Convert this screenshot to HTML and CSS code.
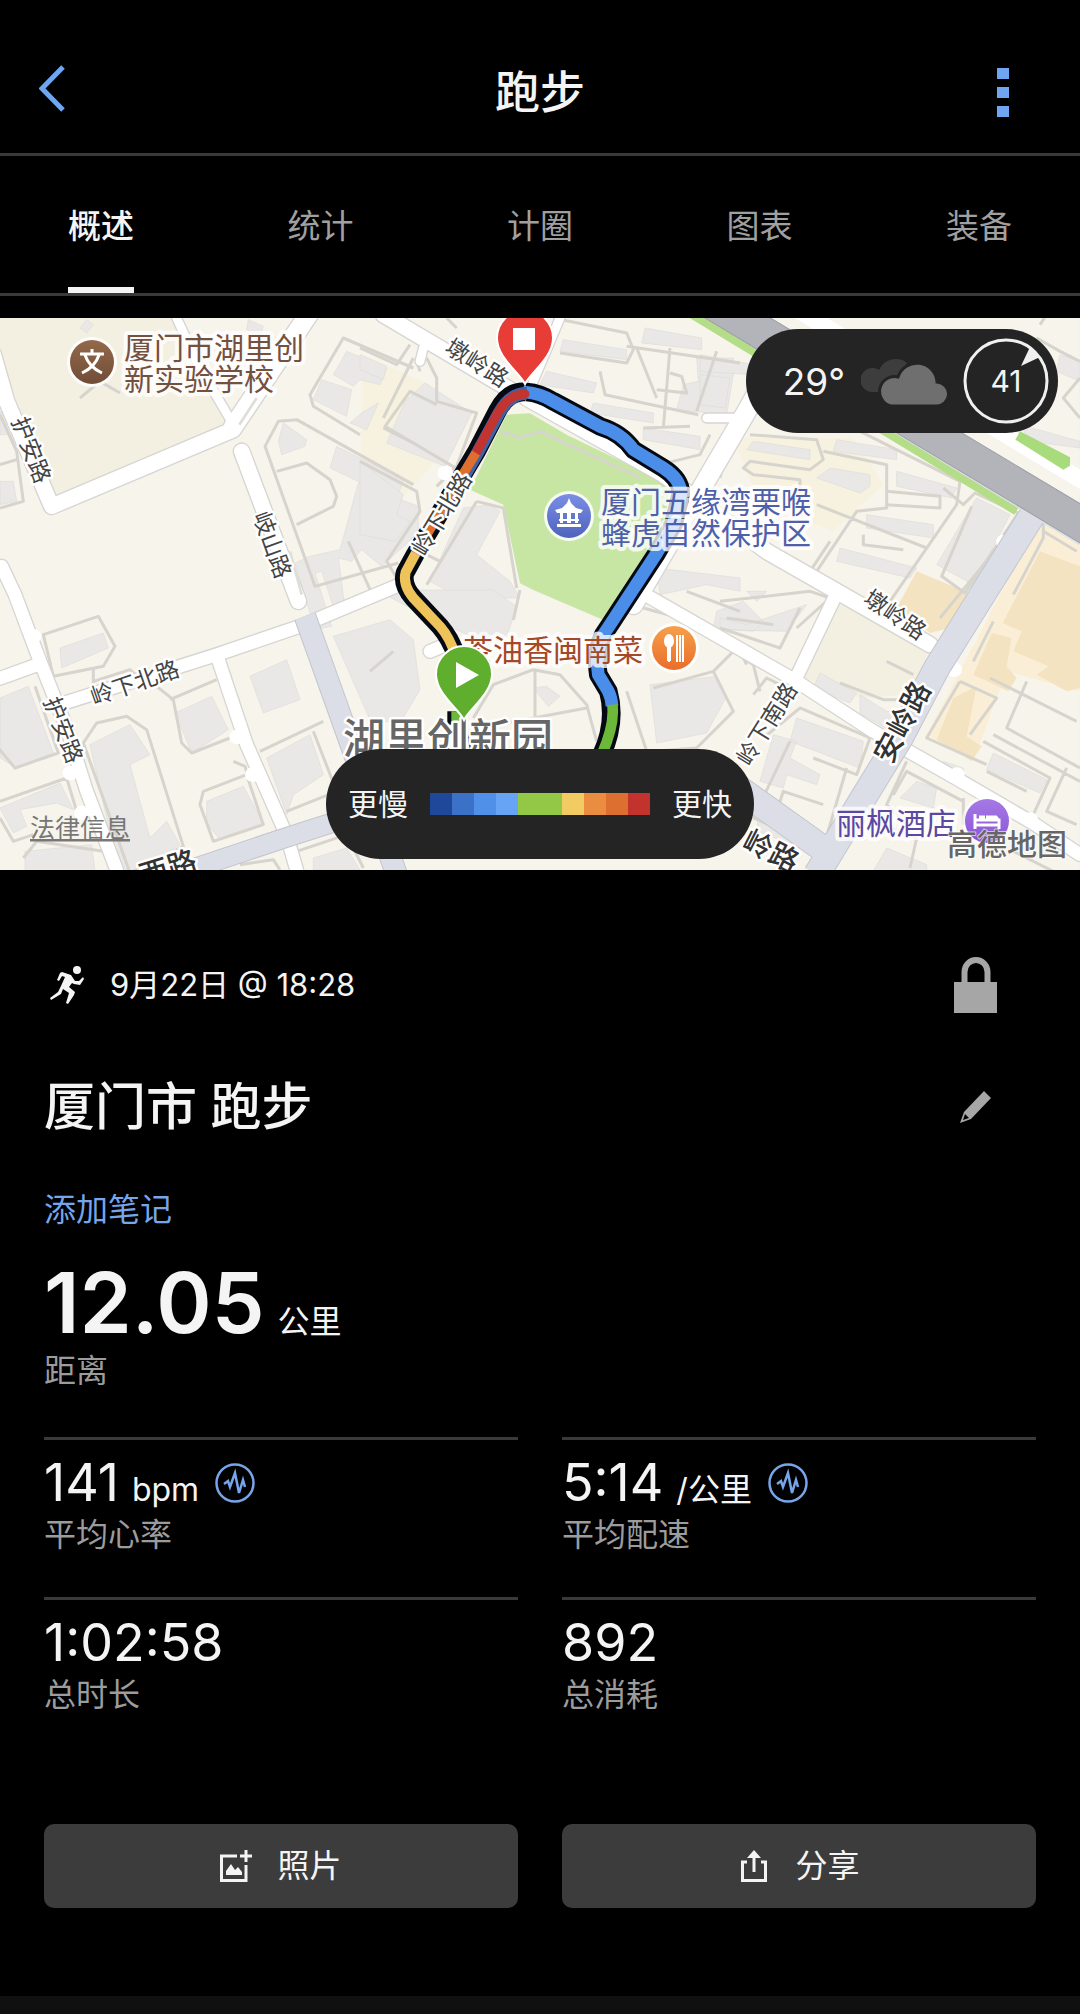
FILE: index.html
```html
<!DOCTYPE html>
<html lang="zh-CN">
<head>
  <meta charset="utf-8">
  <meta name="viewport" content="width=device-width, initial-scale=1">
  <title>跑步</title>
  <link rel="stylesheet" href="styles.css">
</head>
<body>
  <header class="top-bar">
    <button class="icon-button back-button" aria-label="返回">
      <svg width="26" height="48" viewBox="0 0 26 48"><path d="M24 2L3 23.500L24 45" fill="none" stroke="#6ea6f2" stroke-width="5"/></svg>
    </button>
    <h1 class="page-title">跑步</h1>
    <button class="icon-button menu-button" aria-label="更多">
      <svg width="12" height="50" viewBox="0 0 12 50" fill="#6ea6f2"><path d="M0 0h12v11H0zM0 19h12v11H0zM0 38h12v11H0z"/></svg>
    </button>
  </header>

  <nav class="tabs" role="tablist">
    <button class="tab active" role="tab" aria-selected="true">概述</button>
    <button class="tab" role="tab">统计</button>
    <button class="tab" role="tab">计圈</button>
    <button class="tab" role="tab">图表</button>
    <button class="tab" role="tab">装备</button>
  </nav>

  <section class="map">
    <svg class="map-canvas" viewBox="0 0 1080 552">
      <defs>
        <linearGradient id="brown" x2="0" y2="1"><stop stop-color="#94694a"/><stop offset="1" stop-color="#704c38"/></linearGradient>
        <linearGradient id="indigo" x2="0" y2="1"><stop stop-color="#7a8ee6"/><stop offset="1" stop-color="#4f63bd"/></linearGradient>
        <linearGradient id="orange" x2="0" y2="1"><stop stop-color="#f6a04a"/><stop offset="1" stop-color="#ea6d2b"/></linearGradient>
        <linearGradient id="purple" x2="0" y2="1"><stop stop-color="#a679e6"/><stop offset="1" stop-color="#8a55d6"/></linearGradient>
      </defs>

      <!-- terrain is drawn at 3 units per pixel -->
      <g transform="scale(.33333)">
        <rect width="3240" height="1656" fill="#f7f4ec"/>
        <path fill="#f3f0e2" d="M0 0H530L700 330 160 570 0 110zM2530 840L2790 990 2730 1130 2580 1140 2410 1080z"/>
        <path fill="#f7f2df" d="M1090 110L1290 200 1350 380 1200 550 1080 460zM2200 360H2560L2650 500 2500 640 2280 560z"/>
        <path fill="#faefd6" d="M3130 596L3240 650V1120L3020 1060 2920 1330 2780 1250 3000 830z"/>
        <path fill="#f4e3c1" d="M2750 760L2920 830 2850 930 2790 945 2690 870zM3120 700L3240 745V1110L3200 1120 3110 1070 3145 1045 3040 1000 3065 940 3008 915zM2975 945L3035 960 3020 1045 3050 1080 3025 1120 2920 1070zM2860 1140L2930 1105 2900 1255 2945 1285 2915 1330 2810 1265z"/>
        <path fill="#c8e6a3" d="M1520 290L1590 286 1700 350 2010 500 1990 660 1810 906 1600 816 1560 796 1510 560 1410 515 1500 330z"/>

        <!-- buildings -->
        <g class="building">
          <path d="M260 5l20 15-20 25-20-15zM745 5l45 20-10 30-40-20zM1040 100l120 50-20 50-60-15-20 20-60-35zM965 185l90 30-15 80-100-50zM1085 285l50-30-35 80-50-20zM850 315l70 50-5 20-70 25-10-40zM1010 385l200 100-20 60-200-95zM1075 495l180 70v80l-110 100-60-50-30 35-40-10 20 150-30 10-40-120-20 5 50 160-50 10-60-200 45-20 90-20zM0 490h40l10 60-50 10zM0 280l20 10v60H0z"/>
          <path d="M1080 110l80 35-10 40-70-30zM1215 250l60-55 140 90-80 160-175-70zM1080 430l130 100-20 60 40 20-45 60-105-20zM1470 560l30 20-70 130 100 80 30 50h-180l-90-50 100-220zM1690 65l190 30v30l-200-25zM1640 160l150 35-10 30-160-25zM1780 255l180 30v30l-190-30zM1935 30l170 30v35l-180-20zM2090 120h110v50l-20 120-150-15 20-75 45-10zM1930 330l170 25v40l-170-30zM1970 750l250 30v40l-100-20-140 30z"/>
          <path d="M2100 110l160 30v30l-160-10zM2100 170l90 10-15 90-75-10zM2260 370l170 25v30l-190-30zM2510 365l180 30v30l-190-25zM2490 450l120 20v35l-30 20-130-45zM2690 460l180 50-15 30-165-35zM2600 590l200 30v40l-200-30zM2520 690l230 60-20 30-220-50zM2930 540l100 50-110 210-110-60zM3180 110l60 20v60l-70-30zM3060 320l180 50v20l-150-20z"/>
          <path d="M180 990l130-45 15 45-140 60zM0 1140l85-35 75 200-110 45-50-30zM270 1280l120-60 60 90-60 30 60 220 50-50 40 70-150 90-30 10zM0 1470l180-75 40 80-50-20-110 20 20 50-40 20zM75 1600l200-20 10 80H75zM525 1185l110-50 50 100-110 70zM620 1450l110-45 60 110-130 50-40-50zM800 1320l130-70 40 120-90 60-20 60zM750 1075l110-50 40 120-110 40zM1000 955l170-50 70 60 20 150-60 100-90-10zM1600 1110l40-5 40 30-35 30z"/>
          <path d="M1130 816h350l70 50-30 90-60 20-200-90zM1950 1100l200-25 30 60-60 110-150 30zM2150 880l80-30 60 60-30 30-120-10zM2160 900l80 20 180-60-60 80-200-5zM2240 820h60l-30 30zM2460 1065l110 60-20 30-110-45zM2580 1130l80 50 60 5-40 60-100-60zM2390 1200l200 70-10 80-210-80zM2320 1250l70 20-20 50 90 50-10 30-90-30-10 40-70-20zM2980 1305l160 80-20 40-160-70zM2750 1390l60 20-10 60-100-30zM2280 1460l150 70-20 60-140-50zM2660 1590l120 50v20h-160zM940 1620l100-30 40 66h-140zM2830 1330l60 20v20l-60-10z"/>
        </g>

        <!-- footpaths and lanes -->
        <g class="lane">
          <path d="M240 240l60-50 60 35M1240 150l-210-90-100 170 10 35 140 85M1240 500L890 305l-55 5-40 75 150 420 250-70M830 460l90-25 70 50 20 50-10 30-110 55M1045 670l65 145M1150 300l90-180M1150 330l100 50M0 290l50 110 20 150-70 20M0 440l50-15"/>
          <path d="M1080 90l110 50 40-60M1260 160l-10-30M1280 120l30 60v70l120 35-60 160-60 60M1310 260l-80-40-75 105 220 130M1080 430l170 90 10 60-100 150 30 50M1430 550l-150 250M1430 550l80 20 40 240M1260 700l60 30M1370 30l-30-30M1500 340l60 20 60-20 300 140M1660 0l220 45 20 50-20 40-200-30M1880 85l340 50M2010 90l-20 240M1910 90l60 150M1800 160l15 70 280 60M2010 165l35 10 15 50-90-10M1930 330l140-5M2130 350l-30 60-120 30M2150 100l-60 180"/>
          <path d="M2250 350l200 15 20 60-40 30-180-25-20 20 30 20 140 15v40M2470 400l190 40v130l-90 10-120 180M2660 520l160 15v35l-160-10M2450 560l330 130M2590 650v30l120 15M2580 340l300 150-10 70-200 290M2830 510l60 50 35-35 130 60-160 240-70-50 90-210M3080 620l-130 230M3130 640l100 60M3130 600v60l-90 170M3240 180l-50 60 50 60M3120 20l40-60M3110 60l70 40 60 30M2190 350l-30 130M2160 620l150 60 120 80 60-90"/>
          <path d="M130 950l165-55 50 90-35 60-150 30zM280 1090l110-35 20 20M280 1050v50M250 1275l40-60 90-20 60 40 110 350-160 80zM105 1105l70 200-130 45-50-60M0 1450l200-70 30 100M0 1500l40 70 60-20M70 1620l40-50 200 30M470 1105l50 40 25 130 30 30 115-45M510 1145l140-60M600 1460l10-40 130-50 50 150-150 50zM700 1330l35 15 15 50M780 1300l190-90M940 1240l70 180-150 60M890 1600l150-50 50 100M720 1640l100-15 20 31M1560 816l-20 90M1420 1200l60-100 120-45 80 15 80 90 30 110M1605 1060v170M1440 1230l320-60"/>
          <path d="M1960 1110l180-50 60 120-110 110-130 10M2140 1060l60-60 60 40 20 80M2160 850l270-30 60 20-100 90M2160 930l180 60 60-120M2180 900l140 20M2160 980l60 20 20 40M2260 1130l40-50 40 20-20 30M2520 1095l130 50h60M2660 1030l80 40M2290 1260l110-90 210 90-40 110-130-50M2540 1350l-70 240-210-90 110-230M2330 1480l20-60 120 40M2680 1430l40-70 170 90M2720 1330l-60 130 60 60M2890 1440v80M2820 900l180-220M2920 1030l60-120M2880 1090l-100 170 180 80M2880 1090l110 50-80 110M2970 1080l260 130M3080 1090l-60 140 220 120M2980 1250l260 140M2950 1270l200 110-50 110M3200 1350l-60 130 90 40M2960 1360l120 60M2600 1500l150 60-20 90M2450 1560l70 60M3040 1600l120 60"/>
          <path d="M1960 1600l60-80 70 40M1180 1000l-70 60M1880 1120l60 180M2220 880l-160-60M1930 870l220 60"/>
        </g>

        <!-- streets: casing first, then the surface -->
        <g class="street casing">
          <path stroke-width="54" d="M-20 110L20 250 155 565 700 335M725 400L895 850M1150 -10L1530 215M1580 240L1990 470 2300 700 2790 980"/>
          <path stroke-width="64" d="M700 326L925 -10M2340 100L2240 280 1900 860"/>
          <path stroke-width="34" d="M530 0L600 150 700 320M1680 0L1600 190M1270 90L1260 130M2240 300H2120"/>
          <path stroke-width="46" d="M0 1081L110 1041M190 1156L650 1010 900 925 1200 800M5 745L45 830 120 1030 200 1230 260 1420 350 1656M650 1010L740 1280 850 1530M868 1580L890 1656M1910 815L2390 1090 2620 1240 2860 1376 3100 1516 3240 1610M2510 826L2390 1076M1290 1000L1350 975"/>
        </g>
        <g class="street">
          <path stroke-width="46" d="M-20 110L20 250 155 565 700 335M725 400L895 850M1150 -10L1530 215M1580 240L1990 470 2300 700 2790 980"/>
          <path stroke-width="56" d="M700 326L925 -10M2340 100L2240 280 1900 860"/>
          <path stroke-width="26" d="M530 0L600 150 700 320M1680 0L1600 190M1270 90L1260 130M2240 300H2120"/>
          <path stroke-width="38" d="M0 1081L110 1041M190 1156L650 1010 900 925 1200 800M5 745L45 830 120 1030 200 1230 260 1420 350 1656M650 1010L740 1280 850 1530M868 1580L890 1656M1910 815L2390 1090 2620 1240 2860 1376 3100 1516 3240 1610M2510 826L2390 1076M1290 1000L1350 975"/>
          <path stroke-width="44" d="M2862 1055h2M3010 672h2M2870 1370h2M3090 1505h2M210 1365h2M245 1485h2M710 1257h2M757 1370h2M100 955h2M1335 465h2"/>
        </g>
        <path d="M718 320L770 240M870 700L905 830" fill="none" stroke="#dfdedb" stroke-width="8"/>

        <!-- main roads -->
        <g fill="none" stroke="#c3c6ce">
          <path stroke-width="68" d="M915 895L1060 1300 1190 1670"/>
          <path stroke-width="62" d="M555 1660L860 1558 1120 1475"/>
          <path stroke-width="82" d="M3110 570L2950 826 2810 1050 2700 1260 2590 1440 2450 1670M2200 1400L2480 1600"/>
        </g>
        <g fill="none" stroke="#dcdee7">
          <path stroke-width="62" d="M915 895L1060 1300 1190 1670"/>
          <path stroke-width="56" d="M555 1660L860 1558 1120 1475"/>
          <path stroke-width="76" d="M3110 570L2950 826 2810 1050 2700 1260 2590 1440 2450 1670M2200 1400L2480 1600"/>
        </g>
        <path d="M2040 -34L3050 578" fill="none" stroke="#b4dd88" stroke-width="28"/>
        <path d="M2080 -50L3250 660" fill="none" stroke="#dcdfe8" stroke-width="50"/>
        <path d="M2200 -140L3300 520" fill="none" stroke="#fff" stroke-width="50"/>
        <path d="M2100 -68L3300 652" fill="none" stroke="#9d9fa6" stroke-width="104"/>
        <path d="M2100 -68L3300 652" fill="none" stroke="#b2b4b9" stroke-width="98"/>
        <path d="M3060 340l150 78v25l-20 12-144-90z" fill="#a8db7b"/>

        <!-- recorded track -->
        <g fill="none" stroke-linejoin="round">
          <path stroke="#050a12" stroke-width="56" d="M1580 222Q1620 225 1660 250L1800 325Q1865 345 1900 395L1990 450Q2045 485 2042 530L2020 620 1970 706 1830 920 1810 950Q1785 1000 1795 1070L1825 1120Q1850 1210 1805 1310M1580 222Q1525 215 1492 280L1430 400 1245 710 1215 765Q1205 800 1240 840L1320 925Q1350 960 1368 1010M1370 1180V1220"/>
          <path stroke="#4b8eea" stroke-width="38" d="M1570 222Q1620 225 1660 250L1800 325Q1865 345 1900 395L1990 450Q2045 485 2042 530L2020 620 1970 706 1830 920 1810 950Q1785 1000 1795 1070L1825 1120Q1835 1140 1836 1165"/>
          <path stroke="#6cb838" stroke-width="32" d="M1837 1160Q1845 1220 1805 1310M1370 1180V1212"/>
          <path stroke="#3f63a5" stroke-width="38" d="M1580 226Q1530 225 1497 285L1435 400 1395 470"/>
          <path stroke="#c2342f" stroke-width="27" stroke-linecap="round" d="M1575 228Q1525 228 1490 290L1428 405"/>
          <path stroke="#de6f2e" stroke-width="28" d="M1428 405L1385 475 1245 710"/>
          <path stroke="#eec35a" stroke-width="30" d="M1247 706L1217 762Q1207 800 1240 840L1320 925Q1350 960 1365 1010"/>
          <path stroke="#16304a" stroke-width="6" d="M1392 1200L1414 1300"/>
        </g>
      </g>

      <!-- road names -->
      <g class="road-name">
        <text transform="translate(31 132) rotate(69)">护安路</text>
        <text transform="translate(272 227) rotate(70)">岐山路</text>
        <text transform="translate(477 45) rotate(32)">墩岭路</text>
        <text transform="translate(442 196) rotate(-59)">岭下北路</text>
        <text transform="translate(135 365) rotate(-19)">岭下北路</text>
        <text transform="translate(63 412) rotate(69)">护安路</text>
        <text transform="translate(895 297) rotate(34)">墩岭路</text>
        <text transform="translate(767 406) rotate(-58)">岭下南路</text>
      </g>
      <g class="road-name major">
        <text transform="translate(902 404) rotate(-62)">安岭路</text>
        <text transform="translate(771 533) rotate(27)">岭路</text>
        <text transform="translate(168 550) rotate(-17)">西路</text>
      </g>

      <!-- places -->
      <g class="place">
        <text x="124" y="41" fill="#74503f">厦门市湖里创</text>
        <text x="124" y="72" fill="#74503f">新实验学校</text>
        <text x="601" y="195" fill="#4f60ab">厦门五缘湾栗喉</text>
        <text x="601" y="226" fill="#4f60ab">蜂虎自然保护区</text>
        <text x="463" y="343" fill="#a44828">茶油香闽南菜</text>
        <text x="836" y="516" fill="#5a48a3">丽枫酒店</text>
      </g>
      <text class="district" x="343" y="436">湖里创新园</text>

      <g transform="translate(92 44)">
        <circle r="25" fill="#fff" opacity=".85"/><circle r="22" fill="url(#brown)"/>
        <path d="M-12 -8H12M0 -13V-8M-7 -7Q-3 5 10 11M7 -7Q3 5 -10 11" fill="none" stroke="#fff" stroke-width="3"/>
      </g>
      <g transform="translate(569 198)">
        <circle r="25" fill="#fff" opacity=".85"/><circle r="22" fill="url(#indigo)"/>
        <path fill="#fff" d="M0 -18L2 -13 7 -8 14 -6 12 -3H9V7h-3V-3H2V7h-4V-3H-6V7h-3V-3H-12L-14 -6 -7 -8 -2 -13zM-10 3H10V5H-10zM-12 8h24v3h-24z"/>
      </g>
      <g transform="translate(674 330)">
        <circle r="25" fill="#fff" opacity=".85"/><circle r="22" fill="url(#orange)"/>
        <ellipse cx="-5" cy="-7" rx="5" ry="7" fill="#fff"/>
        <path d="M-5 -2V14M3 -13V14M6 -13V14M9 -13V14" stroke="#fff" stroke-width="2"/>
        <path d="M-5 -2V13" stroke="#fff" stroke-width="4"/>
      </g>
      <g transform="translate(987 503)">
        <circle r="25" fill="#fff" opacity=".6"/><circle r="22" fill="url(#purple)"/>
        <path d="M-12 -7V8M-12 4H12V-1H-11M12 8V0M-8 -4H-2M-1 -4H9L12 0" fill="none" stroke="#fff" stroke-width="3"/>
      </g>

      <g transform="translate(464 356)">
        <path d="M0 46C-5 35-28 20-28 0A28 28 0 0 1 28 0C28 20 5 35 0 46z" fill="#5fae2e" stroke="#fff" stroke-width="2"/>
        <path d="M-8 -12L15 1L-8 14z" fill="#fff"/>
      </g>
      <g transform="translate(525 20)">
        <path d="M0 46C-5 35-28 20-28 0A28 28 0 0 1 28 0C28 20 5 35 0 46z" fill="#e83c36" stroke="#fff" stroke-width="2"/>
        <path d="M-12 -10h22v22h-22z" fill="#fff"/>
      </g>

      <a href="#legal"><text class="legal" x="30" y="519">法律信息</text></a>
      <text class="map-brand" x="947" y="537">高德地图</text>
    </svg>

    <div class="weather">
      <span class="temperature">29°</span>
      <svg class="clouds" width="86" height="48" viewBox="0 0 86 48">
        <path fill="#3d3d3d" d="M12 35A12 12 0 1 1 18 13A18 18 0 0 1 46 6L30 35z"/>
        <path fill="#6f6f6f" stroke="#242424" stroke-width="3" d="M30 49A14 14 0 1 1 37 20A20 20 0 0 1 76 25A11 11 0 0 1 75 49z"/>
      </svg>
      <span class="wind">
        <svg class="wind-dial" width="86" height="86" viewBox="0 0 86 86">
          <circle cx="43" cy="43" r="41" fill="none" stroke="#f0f0f0" stroke-width="3"/>
          <path d="M67 9L77 19L58 28z" fill="#f0f0f0"/>
        </svg>
        <span class="wind-speed">41</span>
      </span>
    </div>

    <div class="legend">
      <span>更慢</span>
      <div class="legend-scale">
        <i class="pace-1"></i><i class="pace-2"></i><i class="pace-3"></i><i class="pace-4"></i><i class="pace-5"></i><i class="pace-5"></i><i class="pace-6"></i><i class="pace-7"></i><i class="pace-8"></i><i class="pace-9"></i>
      </div>
      <span>更快</span>
    </div>
  </section>

  <main class="details">
    <div class="row date-row">
      <svg class="runner" width="34" height="38" viewBox="0 0 34 38" fill="#f4f4f4">
        <circle cx="27" cy="4" r="4"/>
        <path d="M12 6L21 9L25 15L29 15L33 11L34 13L30 19L24 18L22 17L19 21L25 26L24 29L18 38L16 37L19 27L13 23L11 28L1 34L0 32L8 26L11 20L15 11L12 10L9 15L7 14L10 7z"/>
      </svg>
      <span class="date">9月22日 @ 18:28</span>
      <button class="icon-button side-icon" aria-label="隐私">
        <svg width="44" height="56" viewBox="0 0 44 56"><path d="M10.500 26V15A11.500 12 0 0 1 33.500 15V26" fill="none" stroke="#a6a6a6" stroke-width="6"/><path d="M0 25h43v31H0z" fill="#a6a6a6"/></svg>
      </button>
    </div>

    <div class="row title-row">
      <h2 class="activity-title">厦门市 跑步</h2>
      <button class="icon-button side-icon" aria-label="编辑">
        <svg width="32" height="32" viewBox="0 0 32 32"><path d="M24 0L31 7L11 28L0 32L4 21zM5 23L3 29L9 27z" fill="#a6a6a6" fill-rule="evenodd"/></svg>
      </button>
    </div>

    <a class="add-note" href="#note">添加笔记</a>

    <div class="distance"><span class="distance-value">12.05</span><span class="unit">公里</span></div>
    <div class="label distance-label">距离</div>

    <div class="stats">
      <div class="stat">
        <div class="value">141<span class="unit">bpm</span>
          <svg class="pulse" width="40" height="40" viewBox="0 0 40 40" fill="none" stroke="#76a5ea"><circle cx="20" cy="20" r="18.500" stroke-width="2.500"/><path d="M9 21L13 18L15 24L20 10L24 30L28 17L30 24" stroke-width="2.500"/></svg>
        </div>
        <div class="label">平均心率</div>
      </div>
      <div class="stat">
        <div class="value">5:14<span class="unit">/公里</span>
          <svg class="pulse" width="40" height="40" viewBox="0 0 40 40" fill="none" stroke="#76a5ea"><circle cx="20" cy="20" r="18.500" stroke-width="2.500"/><path d="M9 21L13 18L15 24L20 10L24 30L28 17L30 24" stroke-width="2.500"/></svg>
        </div>
        <div class="label">平均配速</div>
      </div>
      <div class="stat">
        <div class="value">1:02:58</div>
        <div class="label">总时长</div>
      </div>
      <div class="stat">
        <div class="value">892</div>
        <div class="label">总消耗</div>
      </div>
    </div>

    <div class="actions">
      <button class="action">
        <svg width="32" height="32" viewBox="0 0 32 32"><path d="M17 6H1.500V30.500H26V15" fill="none" stroke="#f4f4f4" stroke-width="3"/><path d="M26 0V12M20 6H32" stroke="#f4f4f4" stroke-width="3"/><path d="M6 25V21L11 14L15 20L18 17L22 22V25z" fill="#f4f4f4"/></svg>
        照片
      </button>
      <button class="action">
        <svg width="32" height="32" viewBox="0 0 32 32"><path d="M9 12H4.500V30.500H27.500V12H23M16 22V5" fill="none" stroke="#f4f4f4" stroke-width="3"/><path d="M16 0L23 8H9z" fill="#f4f4f4"/></svg>
        分享
      </button>
    </div>
  </main>

  <footer class="bottom-bar"></footer>
</body>
</html>
```
FILE: styles.css
```css
* {
  box-sizing: border-box;
}

body {
  margin: 0;
  min-height: 100vh;
  display: flex;
  flex-direction: column;
  background: #000;
  color: #f4f4f4;
  font-family: Inter, "Noto Sans CJK SC", sans-serif;
  font-size: 32px;
}

button {
  padding: 0;
  border: none;
  background: none;
  color: inherit;
  font: inherit;
  cursor: pointer;
}

svg {
  display: block;
  flex: none;
}

/* header */
.top-bar {
  display: flex;
  align-items: center;
  justify-content: space-between;
  height: 156px;
  padding: 32px 53px 0 28px;
  border-bottom: 3px solid #3a3a3a;
}

.icon-button {
  display: flex;
  align-items: center;
  justify-content: center;
  width: 48px;
  height: 56px;
}

.back-button {
  width: 73px;
  padding: 0 36px 8px 10px;
}

.page-title {
  margin: 0;
  font-size: 45px;
  line-height: 60px;
  font-weight: 500;
}

/* tabs */
.tabs {
  display: flex;
  justify-content: space-between;
  height: 140px;
  padding: 0 68px;
  border-bottom: 3px solid #3a3a3a;
}

.tab {
  padding-top: 4px;
  border-bottom: 6px solid transparent;
  color: #a0a0a0;
  font-size: 33px;
}

.tab.active {
  border-bottom-color: #f4f4f4;
  color: #f4f4f4;
  font-weight: 500;
}

/* map */
.map {
  position: relative;
  margin-top: 22px;
  overflow: hidden;
}

.map-canvas {
  width: 100%;
  height: auto;
}

.building {
  fill: #e9e8e6;
  stroke: #dddcd8;
  stroke-width: 2;
}

.lane {
  fill: none;
  stroke: #d6d4cd;
  stroke-width: 9;
  stroke-linejoin: round;
}

.street {
  fill: none;
  stroke: #fff;
  stroke-linejoin: round;
  stroke-linecap: round;
}

.street.casing {
  stroke: #d6d5d2;
}

.road-name text,
.place text,
.district,
.map-brand {
  paint-order: stroke;
  stroke: #fff;
  stroke-width: 5px;
  stroke-linejoin: round;
}

.road-name text {
  fill: #444;
  font-size: 23px;
  text-anchor: middle;
  dominant-baseline: central;
}

.road-name.major text {
  fill: #333;
  font-size: 29px;
  font-weight: 500;
}

.place text {
  font-size: 30px;
  stroke-width: 8px;
  stroke-opacity: .8;
}

.district {
  fill: #666;
  font-size: 42px;
  font-weight: 500;
}

.legal {
  fill: #777;
  font-size: 25px;
  text-decoration: underline;
}

.map-brand {
  fill: #666;
  font-size: 30px;
  font-weight: 500;
  stroke-width: 2px;
  stroke-opacity: .6;
}

.weather {
  position: absolute;
  top: 11px;
  right: 22px;
  display: flex;
  align-items: center;
  height: 104px;
  padding: 0 9px 0 37px;
  border-radius: 52px;
  background: #242424;
}

.temperature {
  font-size: 37px;
}

.clouds {
  margin: 0 16px;
}

.wind {
  position: relative;
}

.wind-speed {
  position: absolute;
  inset: 0;
  display: flex;
  align-items: center;
  justify-content: center;
  font-size: 30px;
}

.legend {
  position: absolute;
  bottom: 11px;
  left: 50%;
  transform: translateX(-50%);
  display: flex;
  align-items: center;
  gap: 22px;
  height: 110px;
  padding: 0 22px;
  border-radius: 55px;
  background: #242424;
  font-size: 30px;
  line-height: 40px;
  white-space: nowrap;
}

.legend-scale {
  display: flex;
}

.legend-scale i {
  width: 22px;
  height: 22px;
}

.pace-1 { background: #1f479a; }
.pace-2 { background: #3b72c8; }
.pace-3 { background: #5090e8; }
.pace-4 { background: #68a4f6; }
.pace-5 { background: #92c846; }
.pace-6 { background: #f3cb63; }
.pace-7 { background: #eb8d40; }
.pace-8 { background: #dd6f30; }
.pace-9 { background: #c2332d; }

/* activity details */
.details {
  padding: 87px 44px 0;
}

.row {
  display: flex;
  align-items: center;
}

.side-icon {
  margin-left: auto;
  margin-right: 36px;
}

.runner {
  margin: 0 26px 0 6px;
}

.date {
  font-size: 31px;
  line-height: 40px;
}

.title-row {
  margin-top: 62px;
  height: 64px;
}

.activity-title {
  margin: 0;
  font-size: 51px;
  line-height: 64px;
  font-weight: 500;
}

.add-note {
  display: block;
  width: fit-content;
  margin-top: 51px;
  color: #76a5ea;
  line-height: 40px;
  text-decoration: none;
}

.distance {
  display: flex;
  align-items: baseline;
  margin-top: 29px;
  height: 88px;
}

.distance-value {
  font-size: 84px;
  line-height: 88px;
  font-weight: 600;
}

.unit {
  margin-left: 13px;
  font-size: 32px;
  line-height: 40px;
}

.label {
  margin-top: 4px;
  color: #9c9c9c;
  line-height: 40px;
}

.stats {
  display: grid;
  grid-template-columns: 1fr 1fr;
  gap: 0 44px;
  margin-top: 46px;
}

.stat {
  height: 160px;
  padding-top: 15px;
  border-top: 3px solid #3a3a3a;
}

.value {
  display: flex;
  align-items: baseline;
  height: 56px;
  font-size: 52px;
  line-height: 56px;
}

.pulse {
  align-self: center;
  margin-left: 16px;
}

.actions {
  display: grid;
  grid-template-columns: 1fr 1fr;
  gap: 44px;
  margin-top: 67px;
}

.action {
  display: flex;
  align-items: center;
  justify-content: center;
  gap: 25px;
  height: 84px;
  border-radius: 10px;
  background: #3c3c3c;
  line-height: 40px;
}

.bottom-bar {
  height: 18px;
  margin-top: auto;
  background: #101010;
}
```
